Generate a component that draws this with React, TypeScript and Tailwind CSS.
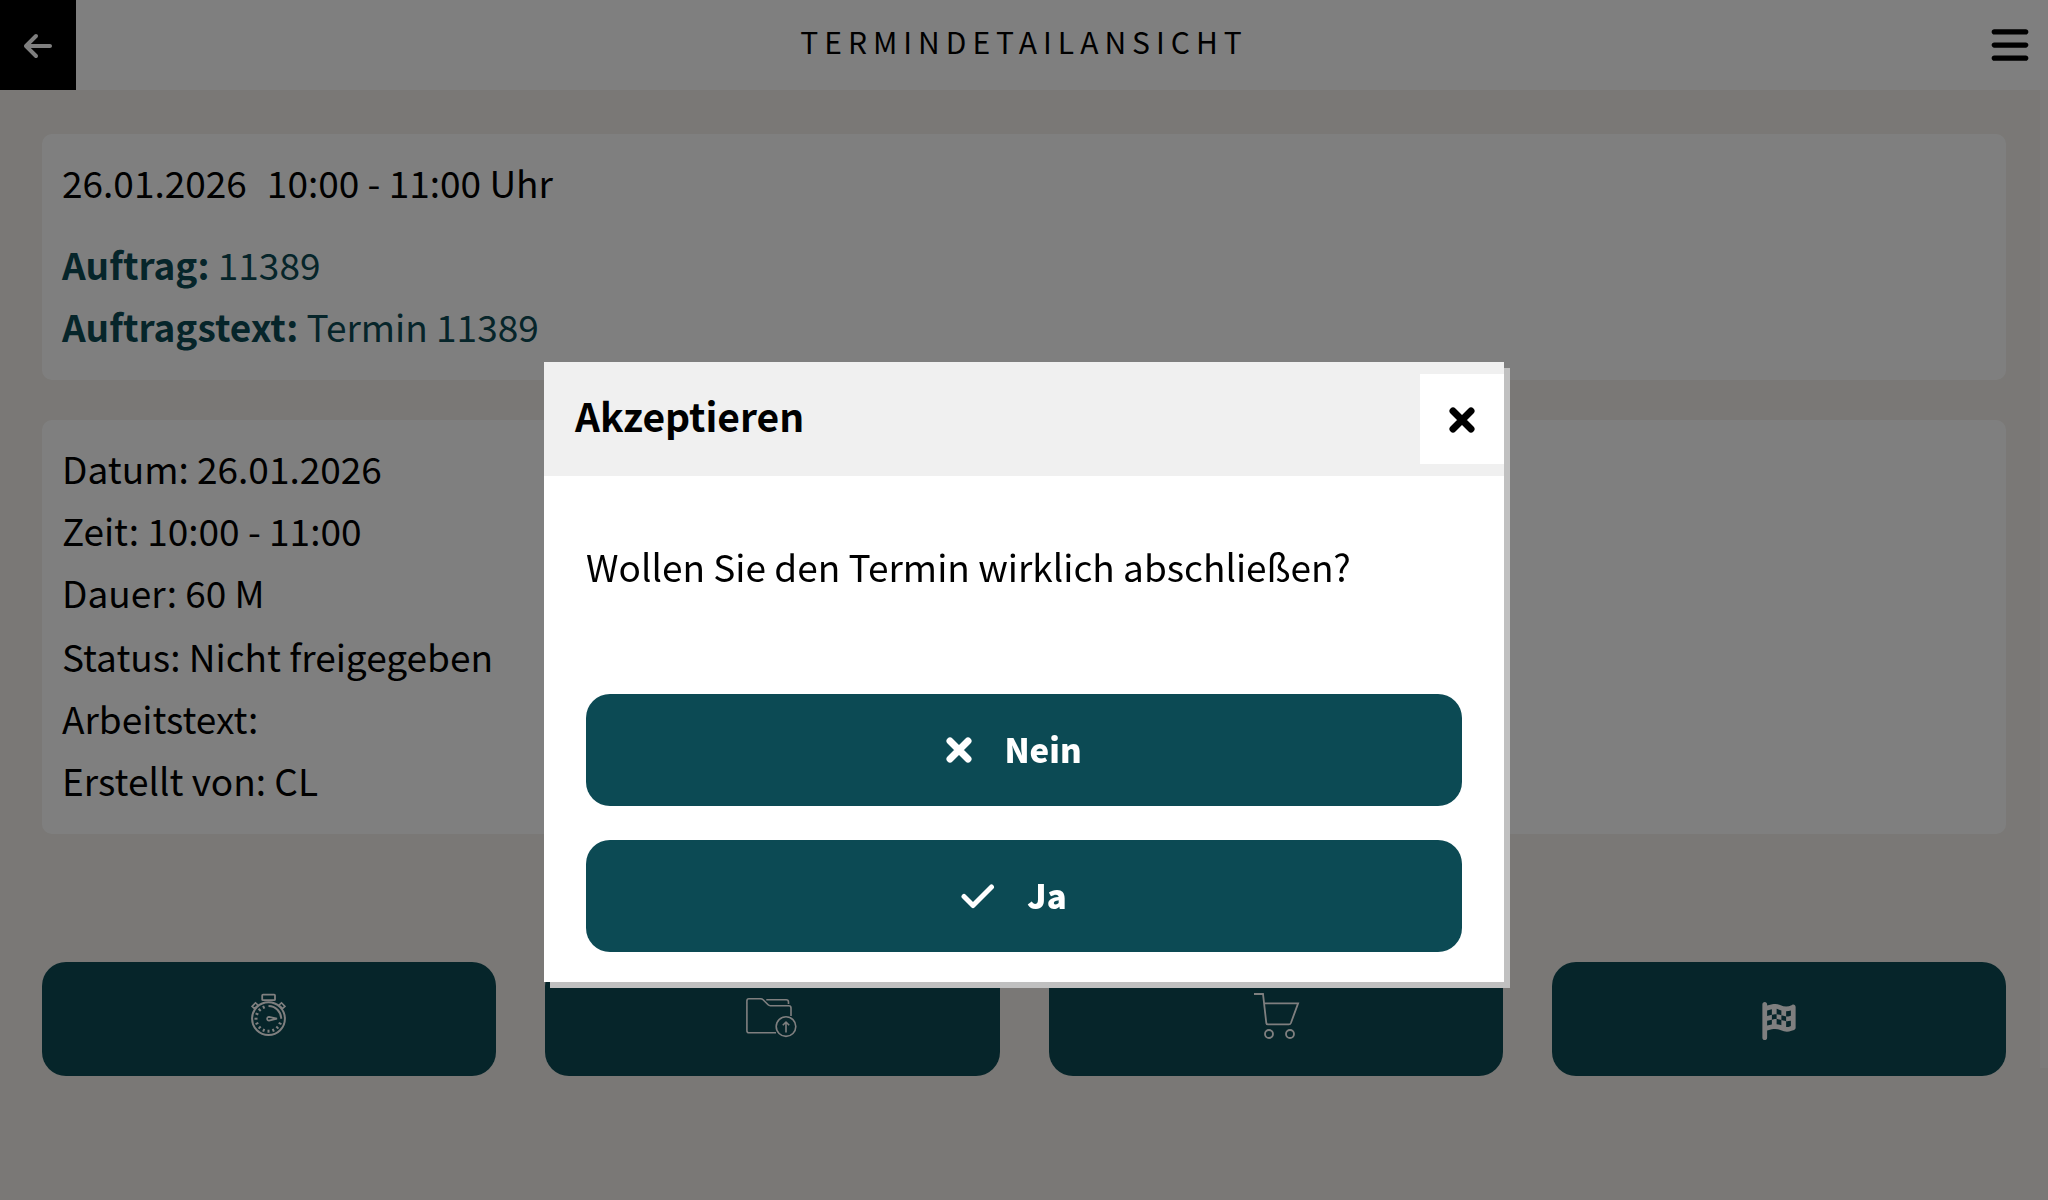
import React from 'react';
import { FaArrowLeft, FaBars, FaFlagCheckered } from 'react-icons/fa6';

const tickAngles = [22.5, 45, 67.5, 90, 112.5, 135, 157.5, 180, 202.5, 225, 247.5];

const detailGroups = [
  [
    { label: 'Datum', value: '26.01.2026' },
    { label: 'Zeit', value: '10:00 - 11:00' },
    { label: 'Dauer', value: '60 M' },
  ],
  [
    { label: 'Status', value: 'Nicht freigegeben' },
    { label: 'Arbeitstext', value: '' },
    { label: 'Erstellt von', value: 'CL' },
  ],
];

const StopwatchIcon = () => (
  <svg className="size-[52px]" viewBox="0 0 52 52" fill="none" stroke="currentColor" strokeWidth="2">
    <rect x="19.2" y="1.6" width="12.8" height="5.6" rx="0.8" strokeWidth="1.8" />
    <path d="M9.1 13.4l3.4-3.6 2.4 2.2-3.4 3.6zM41.9 13.4l-3.4-3.6-2.4 2.2 3.4 3.6z" strokeWidth="1.6" />
    <circle cx="25.5" cy="25.7" r="16.4" />
    <path d="M25.5 13a12.7 12.7 0 0 1 12.7 12.7" />
    {tickAngles.map((angle) => (
      <path key={angle} d="M36.5 25.7h3" transform={`rotate(${angle} 25.5 25.7)`} />
    ))}
    <path d="M34 25.7l-8 1.9a1.9 1.9 0 1 1 0-3.8z" strokeWidth="1.7" />
  </svg>
);

const FolderUploadIcon = () => (
  <svg className="size-[52px]" viewBox="0 0 52 52" fill="none" stroke="currentColor" strokeWidth="1.6" strokeLinejoin="round">
    <path d="M30 39.7H2.9Q.9 39.7.9 37.7V8q0-2.2 2-2.2h11.8q1.4 0 2.4 1l5 5q.9.9 2.2.9h18.500q2.2 0 2.2 2.2v8" />
    <path d="M20.3 6.7h19.8q2.4 0 2.4 2.2v2" />
    <circle cx="40" cy="33.6" r="9.8" />
    <path d="M40 39.6V29M36.8 32.2L40 29l3.2 3.2" />
  </svg>
);

const CartIcon = () => (
  <svg className="size-[52px]" viewBox="0 0 52 52" fill="none" stroke="currentColor" strokeWidth="1.8">
    <path d="M4 1h9l3.3 29q.2 1.4 1.6 1.4h21q1.4 0 2-1.4l7.2-19.6H14" />
    <circle cx="19" cy="41" r="4" />
    <circle cx="40" cy="41" r="4" />
  </svg>
);

const CloseIcon = () => (
  <svg className="size-[26px]" viewBox="0 0 26 26" fill="none" stroke="currentColor" strokeWidth="7" strokeLinecap="round">
    <path d="M4 4l18 18M22 4L4 22" />
  </svg>
);

const CheckIcon = () => (
  <svg className="w-[34px] h-[26px]" viewBox="0 0 34 26" fill="none" stroke="currentColor" strokeWidth="5" strokeLinecap="round" strokeLinejoin="round">
    <path d="M3 13.500l9 9L30.500 4" />
  </svg>
);

const actions = [
  { id: 'time', label: 'Zeiterfassung', icon: <StopwatchIcon /> },
  { id: 'upload', label: 'Datei hochladen', icon: <FolderUploadIcon /> },
  { id: 'cart', label: 'Warenkorb', icon: <CartIcon /> },
  { id: 'finish', label: 'Abschließen', icon: <FaFlagCheckered className="size-[38px] mt-1" /> },
];

const ConfirmDialog = () => (
  <div className="fixed inset-0 flex items-start justify-center bg-black/50 pt-[362px]">
    <div
      role="dialog"
      aria-modal="true"
      aria-labelledby="dialog-title"
      className="w-full max-w-[960px] bg-white pb-[30px] text-black shadow-[6px_6px_0_#c0c0c0]"
    >
      <div className="flex items-center justify-between bg-[#f0f0f0] py-3 pl-[31px]">
        <h2 id="dialog-title" className="pb-2 text-[39px] leading-[60px] font-bold">Akzeptieren</h2>
        <button aria-label="Schließen" className="flex h-[90px] w-[84px] items-center justify-center bg-white pt-0.5">
          <CloseIcon />
        </button>
      </div>
      <div className="flex flex-col px-[42px]">
        <p className="pt-[59px] pb-[97px] leading-[62px]">Wollen Sie den Termin wirklich abschließen?</p>
        <div className="flex flex-col gap-[34px] text-[33px] font-black text-white">
          <button className="flex h-28 items-center justify-center gap-8 rounded-3xl bg-[#0c4a54] pr-5">
            <CloseIcon />
            <span className="pb-0.5">Nein</span>
          </button>
          <button className="flex h-28 items-center justify-center gap-8 rounded-3xl bg-[#0c4a54] pr-5">
            <CheckIcon />
            <span className="pb-0.5">Ja</span>
          </button>
        </div>
      </div>
    </div>
  </div>
);

export default function App() {
  return (
    <div className="relative min-h-screen bg-[#f4f1ec] font-['Noto_Sans_CJK_SC','Noto_Sans',sans-serif] text-[37px] leading-[62px] text-black">
      <header className="flex h-[90px] items-center justify-between bg-white">
        <button aria-label="Zurück" className="flex h-full w-[76px] items-center justify-center bg-black pt-0.5 text-white">
          <FaArrowLeft className="size-8" />
        </button>
        <h1 className="pb-2 text-[30px] tracking-[0.2em] uppercase">Termindetailansicht</h1>
        <button aria-label="Menü" className="flex h-full w-[76px] items-center justify-center">
          <FaBars className="size-[42px]" />
        </button>
      </header>

      <main className="flex flex-col px-[42px] pt-11">
        {/* Appointment summary */}
        <section className="rounded-[10px] bg-white px-5 pt-[17px] pb-[23px]">
          <p className="flex gap-5 pb-5">
            <span>26.01.2026</span>
            <span>10:00 - 11:00 Uhr</span>
          </p>
          <p className="text-[#0c4a54]"><b>Auftrag:</b> 11389</p>
          <p className="text-[#0c4a54]"><b>Auftragstext:</b> Termin 11389</p>
        </section>

        <section className="mt-10 flex flex-col gap-0.5 rounded-[10px] bg-white px-5 pt-[17px] pb-[23px]">
          {detailGroups.map((group) => (
            <div key={group[0].label}>
              {group.map((item) => (
                <p key={item.label}>{item.label}: {item.value}</p>
              ))}
            </div>
          ))}
        </section>

        {/* Action bar */}
        <div className="mt-32 grid grid-cols-4 gap-[49px]">
          {actions.map((action) => (
            <button
              key={action.id}
              aria-label={action.label}
              className="flex h-[114px] items-center justify-center rounded-3xl bg-[#0c4a54] text-white"
            >
              {action.icon}
            </button>
          ))}
        </div>
      </main>

      {/* Scrollbar thumb */}
      <div className="absolute top-0 right-0 h-[89%] w-2 bg-[#fafafa]/60" />

      <ConfirmDialog />
    </div>
  );
}
